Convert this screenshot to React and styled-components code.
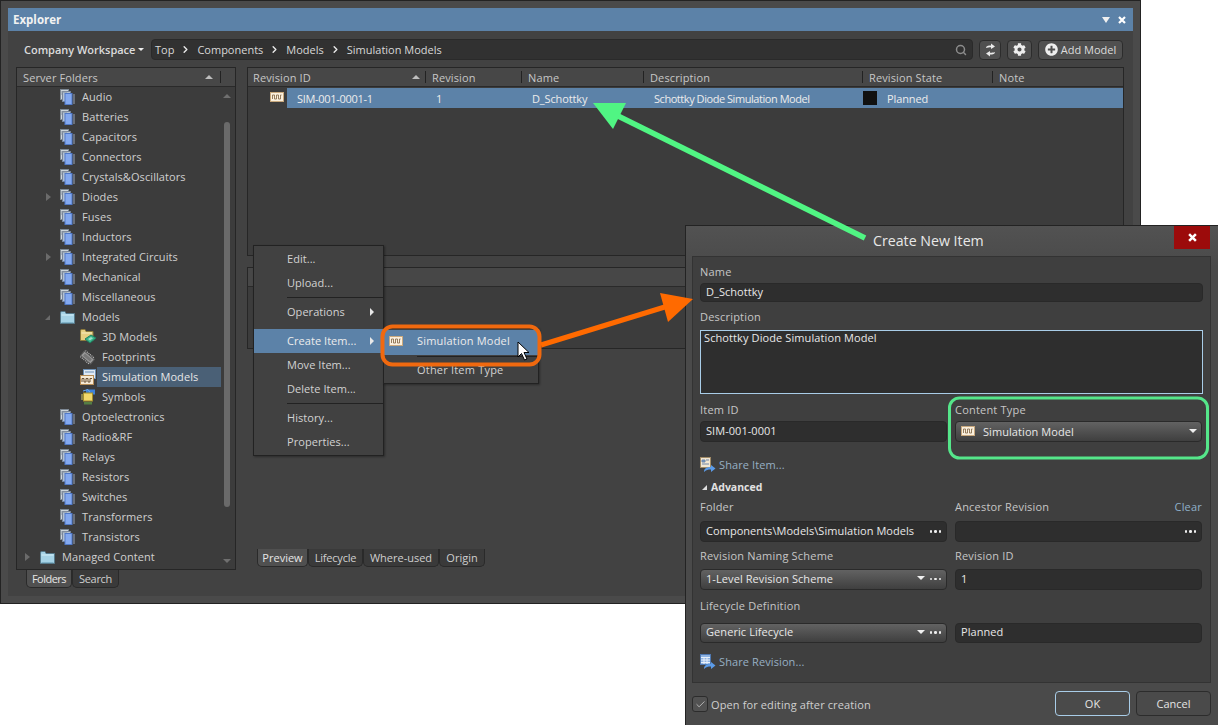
import React from 'react';
import styled, { createGlobalStyle } from 'styled-components';
import { Search, ChevronRight, Check } from 'lucide-react';
import { FaCog, FaPlusCircle } from 'react-icons/fa';

const Global = createGlobalStyle`
  html, body { margin: 0; padding: 0; background: #fff; }
  * { box-sizing: border-box; }
  #root { font-family: "Open Sans", "Noto Sans", "Liberation Sans", sans-serif; font-size: 11px; color: #d2d2d2; }
`;

const Desktop = styled.div`
  position: relative; width: 1218px; height: 725px; overflow: hidden; background: #fff;
`;

/* ---------- Explorer window ---------- */
const Explorer = styled.section`
  position: absolute; left: 0; top: 0; width: 1141px; height: 604px;
  background: #4a4a4a; border: 1px solid #232323; padding: 7px 7px 7px 7px;
  display: flex; flex-direction: column;
`;
const TitleBar = styled.header`
  height: 23px; background: #5c82a8; color: #f2f2f2; font-weight: 700; font-size: 11.5px;
  display: flex; align-items: center; justify-content: space-between; padding: 0 7px 0 5px;
`;
const TitleIcons = styled.div`display: flex; align-items: center; gap: 8px;`;
const Body = styled.div`
  flex: 1; background: #424242; padding: 8px 9px 8px 8px; display: flex; flex-direction: column; gap: 7px;
`;
const Toolbar = styled.div`display: flex; align-items: center; height: 21px;`;
const WorkspaceMenu = styled.div`
  width: 135px; padding-left: 8px; font-weight: 600; color: #dcdcdc; display: flex; align-items: center; gap: 3px; white-space: nowrap; letter-spacing: -.02px;
`;
const Caret = styled.span`
  width: 0; height: 0; border-left: 3px solid transparent; border-right: 3px solid transparent;
  border-top: 3px solid #eee; display: inline-block;
`;
const PathBar = styled.div`
  width: 822px; height: 21px; background: #313131; border: 1px solid #2a2a2a; border-radius: 4px;
  display: flex; align-items: center; padding: 0 5px 0 3px; color: #d8d8d8; gap: 6px;
  svg.chev { color: #eaeaea; }
`;
const Spacer = styled.div`flex: 1;`;
const ToolButton = styled.button`
  height: 20px; width: ${p => p.$w}px; margin-left: 6px; padding: 0; font: inherit; color: #dcdcdc;
  background: #505050; border: 1px solid #2c2c2c; border-radius: 4px;
  display: flex; align-items: center; justify-content: center; gap: 3px;
`;
const Columns = styled.div`display: flex; gap: 11px; flex: 1;`;
const LeftCol = styled.div`width: 220px; display: flex; flex-direction: column;`;
const RightCol = styled.div`flex: 1; display: flex; flex-direction: column; padding-bottom: 21px;`;
const Panel = styled.div`
  border: 1px solid #262626; background: #3c3c3c; display: flex; flex-direction: column;
  height: ${p => p.$h}px; margin-bottom: ${p => p.$mb || 0}px;
`;
const PanelHead = styled.div`
  height: 19px; background: #474747; border-bottom: 1px solid #2a2a2a; display: flex; align-items: center; color: #c6c6c6; flex-shrink: 0;
`;
const HeadTitle = styled.div`flex: 1; padding-left: 6px; letter-spacing: .1px;`;
const SortUp = styled.span`
  width: 0; height: 0; border-left: 4px solid transparent; border-right: 4px solid transparent;
  border-bottom: 4px solid #bdbdbd; display: block;
`;
const HeadSep = styled.span`width: 1px; height: 12px; background: #222; margin: 0 14px 0 7px;`;
const TreeWrap = styled.div`flex: 1; display: flex;`;
const Tree = styled.div`flex: 1; display: flex; flex-direction: column;`;
const TreeRow = styled.div`
  height: 20px; display: flex; align-items: center; padding-left: ${p => 6 + p.$level * 20}px; flex-shrink: 0;
`;
const Expander = styled.span`width: 17px; height: 20px; display: flex; align-items: center; padding-left: ${p => p.$x || 1}px;`;
const IconSlot = styled.span`width: 20px; height: 20px; display: flex; align-items: center;`;
const RowLabel = styled.span`
  height: 20px; line-height: 20px; padding: 0 2px; color: #d0d0d0; white-space: nowrap; letter-spacing: .08px;
  ${p => p.$sel ? 'background:#4a6076; width:124px; margin-left:-3px; padding-left:5px; color:#e6e6e6;' : ''}
`;
const ScrollBar = styled.div`width: 14px; position: relative;`;
const ScrollThumb = styled.div`
  position: absolute; left: 3px; top: 35px; width: 6px; height: 385px; background: #6a6a6a; border-radius: 3px;
`;
const ArrowUp = styled.span`
  position: absolute; left: 2px; top: 7px; width: 0; height: 0; border-left: 4px solid transparent; border-right: 4px solid transparent;
  border-bottom: 4px solid #6f6f6f;
`;
const ArrowDown = styled.span`
  position: absolute; left: 2px; bottom: 6px; width: 0; height: 0; border-left: 4px solid transparent; border-right: 4px solid transparent;
  border-top: 4px solid #6f6f6f;
`;
const Tabs = styled.div`display: flex; margin-left: ${p => p.$ml}px;`;
const Tab = styled.div`
  height: 18px; width: ${p => p.$w}px; border: 1px solid #2a2a2a; border-top: none; border-radius: 0 0 5px 5px;
  background: ${p => p.$active ? '#505050' : '#3a3a3a'}; color: ${p => p.$active ? '#e6e6e6' : '#cfcfcf'};
  display: flex; align-items: center; justify-content: center; letter-spacing: ${p => p.$ls ?? 0}px;
`;

/* ---------- Table ---------- */
const HeadCell = styled.div`
  width: ${p => p.$w}px; height: 100%; display: flex; align-items: center; padding-left: ${p => p.$first ? 5 : 7}px; position: relative; letter-spacing: .12px;
  flex-shrink: 0;
  &::before { content: ''; display: ${p => p.$first ? 'none' : 'block'}; position: absolute; left: 0; top: 3px; height: 12px; width: 1px; background: #222; }
`;
const SortMark = styled.span`position: absolute; right: 5px; top: 7px; display: block;`;
const Row = styled.div`display: flex; height: 20px; margin-top: 1px;`;
const RowIcon = styled.div`width: 39px; display: flex; align-items: center; padding-left: 22px; padding-bottom: 3px;`;
const SelBand = styled.div`flex: 1; background: #5c82a8; display: flex; align-items: center; color: #ececec;`;
const Cell = styled.div`
  width: ${p => p.$w}px; padding-left: ${p => p.$pl}px; flex-shrink: 0; display: flex; align-items: center; gap: 10px;
  letter-spacing: ${p => p.$ls ?? -.12}px; white-space: pre;
`;
const Swatch = styled.span`width: 14px; height: 14px; background: #111; display: inline-block;`;

/* ---------- Context menu ---------- */
const Menu = styled.div`
  position: absolute; left: ${p => p.$x}px; top: ${p => p.$y}px; width: ${p => p.$w}px; height: ${p => p.$h}px;
  background: #414141; border: 1px solid #222; padding-top: 1px; box-shadow: 1px 1px 2px rgba(0,0,0,.35);
`;
const MenuItem = styled.div`
  height: 24px; display: flex; align-items: center; padding: 0 0 2px 33px; position: relative; letter-spacing: .05px;
  background: ${p => p.$active ? '#5c82a8' : 'transparent'}; color: ${p => p.$active ? '#ececec' : '#d2d2d2'};
`;
const MenuSep = styled.div`height: 5px; padding: 2px 0 2px 33px; &::after { content: ''; display: block; height: 1px; background: ${p => p.$faint ? 'transparent' : '#222'}; }`;
const MenuTri = styled.span`
  position: absolute; right: 9px; top: 8px; width: 0; height: 0; border-top: 4px solid transparent; border-bottom: 4px solid transparent;
  border-left: 4px solid #e8e8e8;
`;
const SubItem = styled(MenuItem)`height: ${p => p.$h || 24}px; padding-bottom: ${p => p.$pb ?? 2}px; letter-spacing: .2px;`;
const SubIcon = styled.span`position: absolute; left: 5px; top: 6px; display: flex;`;
const SubSep = styled.div`height: 3px; padding: 1px 0 1px 33px; &::after { content: ''; display: block; height: 1px; background: #222; }`;

/* ---------- Dialog ---------- */
const Dialog = styled.section`
  position: absolute; left: 685px; top: 225px; width: 533px; height: 500px;
  background: linear-gradient(#525252, #4a4a4a 40px, #4a4a4a); border: 1px solid #232323; border-right: none; border-bottom: none;
  display: flex; flex-direction: column;
`;
const DialogHead = styled.header`
  height: 30px; display: flex; justify-content: space-between; align-items: flex-start; padding: 0 8px 0 187px; flex-shrink: 0;
`;
const DialogTitle = styled.div`font-size: 14.2px; color: #e8e8e8; line-height: 30px;`;
const CloseBtn = styled.div`
  width: 36px; height: 23px; background: #9c0b0b; display: flex; align-items: center; justify-content: center;
`;
const DialogPanel = styled.div`
  margin: 0 7px 0 6px; height: 427px; background: #3f3f3f; border: 1px solid #333; padding: 7px 7px 0 7px;
`;
const FieldLabel = styled.div`
  height: 16px; line-height: 16px; color: #c6c6c6; letter-spacing: .2px; display: flex; justify-content: space-between;
  margin-top: ${p => p.$mt || 0}px; margin-bottom: ${p => p.$mb ?? 3}px;
`;
const ClearLink = styled.span`color: #8fb0c9;`;
const TextBox = styled.div`
  height: ${p => p.$h || 21}px; background: #2e2e2e; border: 1px solid #292929; border-radius: 4px; color: #e8e8e8;
  display: flex; align-items: center; justify-content: space-between; padding: 0 5px ${p => p.$pb ?? 2}px; letter-spacing: .05px; white-space: nowrap;
`;
const TextArea = styled.div`
  height: 64px; background: #2e2e2e; border: 1px solid #a9cde8; color: #e8e8e8; padding: 0 3px; line-height: 14px; letter-spacing: .1px;
`;
const Pair = styled.div`display: grid; grid-template-columns: 247px 247px; column-gap: 8px; margin-top: ${p => p.$mt || 0}px;`;
const Dropdown = styled.div`
  height: ${p => p.$h || 21}px; background: linear-gradient(#626262, #3f3f3f); border: 1px solid #2a2a2a; border-radius: 4px; color: #e8e8e8;
  display: flex; align-items: center; padding: 0 5px ${p => p.$pb ?? 1}px; gap: 5px; letter-spacing: .08px; white-space: nowrap;
`;
const Grow = styled.span`flex: 1;`;
const DownTri = styled.span`
  width: 0; height: 0; border-left: 4.5px solid transparent; border-right: 4.5px solid transparent; border-top: 4px solid #f0f0f0; display: inline-block;
  margin-right: ${p => p.$mr || 0}px;
`;
const Dots = styled.span`display: inline-flex; gap: 2px; margin-top: 2px;
  i { width: 2.5px; height: 2.5px; border-radius: 50%; background: #eee; display: block; }
`;
const ShareLine = styled.div`
  height: 16px; display: flex; align-items: center; gap: 3px; color: #97afc4; margin-top: ${p => p.$mt}px; letter-spacing: .1px;
  span { margin-top: -2px; }
`;
const AdvancedLine = styled.div`
  height: 16px; display: flex; align-items: center; gap: 4px; font-weight: 700; color: #e2e2e2; margin-top: 6px; padding-left: 2px; font-size: 10.5px;
`;
const ExpandedTri = styled.span`
  width: 0; height: 0; border-left: 5px solid transparent; border-bottom: 5px solid ${p => p.$c || '#ddd'}; display: inline-block;
`;
const DialogFoot = styled.footer`
  flex: 1; display: flex; align-items: flex-start; padding: 8px 7px 0 6px; gap: 6px;
`;
const CheckBox = styled.span`
  width: 16px; height: 16px; margin-top: 5px; border: 1px solid #2c2c2c; border-radius: 3px; background: #525252; display: flex; align-items: center; justify-content: center; color: #ddd;
`;
const CheckLabel = styled.span`color: #cfcfcf; margin: 5px 0 0 -3px; line-height: 18px; letter-spacing: .12px;`;
const DlgButton = styled.div`
  width: 75px; height: 25px; border: 1px solid ${p => p.$primary ? '#a9cde8' : '#2c2c2c'}; border-radius: 4px; background: #4a4a4a;
  color: #e4e4e4; display: flex; align-items: center; justify-content: center;
`;

/* ---------- Overlay ---------- */
const Overlay = styled.svg`position: absolute; left: 0; top: 0; pointer-events: none;`;

/* ---------- Icon drawings ---------- */
const StackIcon = () => (
  <svg width="15" height="16" viewBox="0 0 15 16">
    <rect x=".5" y=".5" width="8" height="10" fill="#cdd5dc" stroke="#7d8894" />
    <rect x="2.5" y="2.5" width="8" height="10" fill="#b2c0d2" stroke="#76849a" />
    <rect x="5" y="4.5" width="7" height="11" fill="#84a9f0" stroke="#5079c8" />
    <path d="M13 6h2M13 8h2M13 10h2M13 12h2M13 14h2" stroke="#97a3b8" strokeWidth="1" />
    <path d="M1 3h6M1 5h1" stroke="#8a95a2" />
  </svg>
);
const FolderIcon = () => (
  <svg width="15" height="13" viewBox="0 0 15 13">
    <path d="M.5 2V12.5H14.5V2.5H6L5 .5H1Z" fill="#a6d3e6" stroke="#56798a" />
    <path d="M1.5 4H13.5" stroke="#d4eef8" />
    <path d="M1.5 11.5H13.5" stroke="#7fb2c8" />
  </svg>
);
const Folder3D = () => (
  <svg width="17" height="16" viewBox="0 0 17 16">
    <path d="M.5 2V11.5H13V2.5H6L5 .5H1Z" fill="#e6cf82" stroke="#8c7a3c" />
    <path d="M1.5 4H12" stroke="#f7ecc0" />
    <path d="M5 10L11 6L16 9L10 14Z" fill="#37b38a" stroke="#1e7f60" />
    <path d="M8 10l3-2 2 1.2-3 2.2Z" fill="#9be0c8" />
  </svg>
);
const FootprintIcon = () => (
  <svg width="15" height="15" viewBox="0 0 15 15">
    <g transform="rotate(40 7.5 7.5)">
      <rect x="1" y="4.5" width="13" height="6" fill="#9a9a9a" stroke="#5a5a5a" />
      <path d="M2 3v1M4 3v1M6 3v1M8 3v1M10 3v1M12 3v1M2 11v1M4 11v1M6 11v1M8 11v1M10 11v1M12 11v1" stroke="#c8c8c8" />
      <rect x="3" y="6" width="9" height="3" fill="#777" />
    </g>
  </svg>
);
const SimBadge = ({ w = 14, h = 10 }) => (
  <svg width={w} height={h} viewBox="0 0 14 10">
    <rect x=".5" y=".5" width="13" height="9" fill="#fbf0de" stroke="#c9a97e" />
    <path d="M2.5 7V3H4.5V7H6.5V3H8.5V7H10.5V3H11.5" fill="none" stroke="#8a7050" strokeWidth=".9" />
  </svg>
);
const SimTreeIcon = () => (
  <svg width="16" height="16" viewBox="0 0 16 16">
    <rect x="3.5" y=".5" width="12" height="9" fill="#dfe9f4" stroke="#6b8fb5" />
    <path d="M5 3h9" stroke="#6b8fb5" />
    <rect x=".5" y="6.5" width="13" height="9" fill="#f6ead6" stroke="#b58c56" />
    <path d="M2 13V9.5H4V13H6V9.5H8V13H10V9.5H12" fill="none" stroke="#6a5236" />
  </svg>
);
const SymbolIcon = () => (
  <svg width="16" height="16" viewBox="0 0 16 16">
    <rect x="6" y=".5" width="9" height="5" fill="#3f82d8" />
    <path d="M3 2l5-1.5 2 3" fill="none" stroke="#6aaaf0" />
    <rect x="3.5" y="4" width="9" height="8" fill="#f1d86a" stroke="#a48f2a" />
    <path d="M1 6h2M1 8h2M1 10h2" stroke="#d6c65a" />
    <path d="M5 13v2.5M7 13v2.5M9 13v2.5M11 13v2.5" stroke="#6fc04d" />
  </svg>
);
const ShareIcon = ({ table }) => (
  <svg width="16" height="16" viewBox="0 0 16 16">
    <rect x=".5" y=".5" width="10" height="10" fill={table ? '#8fb4e4' : '#f1e6d2'} stroke={table ? '#4f78b0' : '#a08a66'} />
    {table
      ? <path d="M1 3.5h9M1 6h9M1 8.5h9M4 3.5v6.5M7 3.5v6.5" stroke="#e8f0fa" />
      : <path d="M2 3h3v2H2ZM2 7h7M6 3h3" stroke="#6f86a8" fill="#6f9ad0" />}
    <path d="M4 15c0-4 3-5 7-5V8l4.5 3.5L11 15v-2.5c-3 0-5 .5-7 2.5Z" fill="#5b9be8" />
  </svg>
);
const SwapIcon = () => (
  <svg width="11" height="14" viewBox="0 0 11 14">
    <path d="M1 5C1 3 3 2.5 6 2.5V.5L10 3.5L6 6V4.2C4 4.2 2.6 4.4 1 5Z" fill="#eaeaea" />
    <path d="M10 9C10 11 8 11.5 5 11.5V13.5L1 10.5L5 8V9.8C7 9.8 8.4 9.6 10 9Z" fill="#eaeaea" />
  </svg>
);
const Xmark = ({ s = 8, w = 2.2 }) => (
  <svg width={s} height={s} viewBox="0 0 8 8"><path d="M1 1L7 7M7 1L1 7" stroke="#fff" strokeWidth={w} /></svg>
);
const RightTri = () => (
  <svg width="7" height="8" viewBox="0 0 7 8"><path d="M1 0L6 4L1 8Z" fill="#6b6b6b" /></svg>
);

/* ---------- Data ---------- */
const stack = <StackIcon />;
const treeRows = [
  ['Audio', 1, stack], ['Batteries', 1, stack], ['Capacitors', 1, stack], ['Connectors', 1, stack],
  ['Crystals&Oscillators', 1, stack], ['Diodes', 1, stack, 'closed'], ['Fuses', 1, stack], ['Inductors', 1, stack],
  ['Integrated Circuits', 1, stack, 'closed'], ['Mechanical', 1, stack], ['Miscellaneous', 1, stack],
  ['Models', 1, <FolderIcon />, 'open'], ['3D Models', 2, <Folder3D />], ['Footprints', 2, <FootprintIcon />],
  ['Simulation Models', 2, <SimTreeIcon />, null, true], ['Symbols', 2, <SymbolIcon />],
  ['Optoelectronics', 1, stack], ['Radio&RF', 1, stack], ['Relays', 1, stack], ['Resistors', 1, stack],
  ['Switches', 1, stack], ['Transformers', 1, stack], ['Transistors', 1, stack],
  ['Managed Content', 0, <FolderIcon />, 'closed'],
];
const crumbs = ['Top', 'Components', 'Models', 'Simulation Models'];
const headCols = [['Revision ID', 177], ['Revision', 96], ['Name', 122], ['Description', 219], ['Revision State', 130], ['Note', 130]];
const Dot3 = () => <Dots><i /><i /><i /></Dots>;

export default function App() {
  return (
    <Desktop>
      <Global />
      <Explorer>
        <TitleBar>
          <span>Explorer</span>
          <TitleIcons>
            <svg width="8" height="6" viewBox="0 0 8 6"><path d="M0 0H8L4 6Z" fill="#f0f0f0" /></svg>
            <Xmark />
          </TitleIcons>
        </TitleBar>
        <Body>
          <Toolbar>
            <WorkspaceMenu>Company Workspace <Caret /></WorkspaceMenu>
            <PathBar>
              {crumbs.map((c, i) => (
                <React.Fragment key={c}>
                  {i > 0 && <ChevronRight className="chev" size={11} strokeWidth={3} />}
                  <span>{c}</span>
                </React.Fragment>
              ))}
              <Spacer />
              <Search size={12} color="#8c8c8c" strokeWidth={3} />
            </PathBar>
            <ToolButton $w={22}><SwapIcon /></ToolButton>
            <ToolButton $w={25}><FaCog size={13} color="#eee" /></ToolButton>
            <ToolButton $w={85}><FaPlusCircle size={13} color="#eee" />Add Model</ToolButton>
          </Toolbar>
          <Columns>
            <LeftCol>
              <Panel $h={503}>
                <PanelHead>
                  <HeadTitle>Server Folders</HeadTitle>
                  <SortUp />
                  <HeadSep />
                </PanelHead>
                <TreeWrap>
                  <Tree>
                    {treeRows.map(([label, level, icon, exp, sel]) => (
                      <TreeRow key={label} $level={level}>
                        <Expander $x={level === 0 ? 1 : 2}>
                          {exp === 'closed' && <RightTri />}
                          {exp === 'open' && <ExpandedTri $c="#6b6b6b" />}
                        </Expander>
                        <IconSlot>{icon}</IconSlot>
                        <RowLabel $sel={sel}>{label}</RowLabel>
                      </TreeRow>
                    ))}
                  </Tree>
                  <ScrollBar>
                    <ArrowUp />
                    <ScrollThumb />
                    <ArrowDown />
                  </ScrollBar>
                </TreeWrap>
              </Panel>
              <Tabs $ml={10}>
                <Tab $active $w={46} $ls={-.5}>Folders</Tab>
                <Tab $w={47} $ls={-.3}>Search</Tab>
              </Tabs>
            </LeftCol>
            <RightCol>
              <Panel $h={189} $mb={11}>
                <PanelHead>
                  {headCols.map(([h, w], i) => (
                    <HeadCell key={h} $w={w} $first={i === 0}>
                      {h}
                      {i === 0 && <SortMark><SortUp /></SortMark>}
                    </HeadCell>
                  ))}
                </PanelHead>
                <Row>
                  <RowIcon><SimBadge /></RowIcon>
                  <SelBand>
                    <Cell $w={138} $pl={10} $ls={-.3}>SIM-001-0001-1</Cell>
                    <Cell $w={96} $pl={11}>1</Cell>
                    <Cell $w={122} $pl={11}>D_Schottky</Cell>
                    <Cell $w={219} $pl={11} $ls={-.45}>Schottky Diode Simulation Model</Cell>
                    <Cell $w={130} $pl={1}><Swatch />Planned</Cell>
                  </SelBand>
                </Row>
              </Panel>
              <Panel $h={82}>
                <PanelHead />
              </Panel>
              <Spacer />
              <Tabs $ml={10}>
                <Tab $active $w={51}>Preview</Tab>
                <Tab $w={55} $ls={-.2}>Lifecycle</Tab>
                <Tab $w={76}>Where-used</Tab>
                <Tab $w={46}>Origin</Tab>
              </Tabs>
            </RightCol>
          </Columns>
        </Body>
      </Explorer>

      <Menu $x={253} $y={245} $w={131} $h={211}>
        <MenuItem>Edit...</MenuItem>
        <MenuItem>Upload...</MenuItem>
        <MenuSep />
        <MenuItem>Operations<MenuTri /></MenuItem>
        <MenuSep $faint />
        <MenuItem $active>Create Item...<MenuTri /></MenuItem>
        <MenuItem>Move Item...</MenuItem>
        <MenuItem>Delete Item...</MenuItem>
        <MenuSep />
        <MenuItem>History...</MenuItem>
        <MenuItem>Properties...</MenuItem>
      </Menu>
      <Menu $x={383} $y={328} $w={156} $h={56}>
        <SubItem $active $h={25} $pb={4}>
          <SubIcon><SimBadge /></SubIcon>
          Simulation Model
        </SubItem>
        <SubSep />
        <SubItem $h={24}>Other Item Type</SubItem>
      </Menu>

      <Dialog>
        <DialogHead>
          <DialogTitle>Create New Item</DialogTitle>
          <CloseBtn><Xmark s={9} /></CloseBtn>
        </DialogHead>
        <DialogPanel>
          <FieldLabel>Name</FieldLabel>
          <TextBox $h={19} $pb={3}>D_Schottky</TextBox>
          <FieldLabel $mt={7} $mb={5}>Description</FieldLabel>
          <TextArea>Schottky Diode Simulation Model</TextArea>
          <Pair $mt={8}>
            <div>
              <FieldLabel>Item ID</FieldLabel>
              <TextBox>SIM-001-0001</TextBox>
            </div>
            <div>
              <FieldLabel>Content Type</FieldLabel>
              <Dropdown><SimBadge />&nbsp;Simulation Model<Grow /><DownTri $mr={-1} /></Dropdown>
            </div>
          </Pair>
          <ShareLine $mt={15}><ShareIcon /><span>Share Item...</span></ShareLine>
          <AdvancedLine><ExpandedTri $c="#ddd" />Advanced</AdvancedLine>
          <Pair $mt={4}>
            <div>
              <FieldLabel $mb={6}>Folder</FieldLabel>
              <TextBox>Components\Models\Simulation Models<Dot3 /></TextBox>
            </div>
            <div>
              <FieldLabel $mb={6}>Ancestor Revision<ClearLink>Clear</ClearLink></FieldLabel>
              <TextBox><span /><Dot3 /></TextBox>
            </div>
          </Pair>
          <Pair $mt={6}>
            <div>
              <FieldLabel $mb={5}>Revision Naming Scheme</FieldLabel>
              <Dropdown $pb={3}>1-Level Revision Scheme<Grow /><DownTri /><Dot3 /></Dropdown>
            </div>
            <div>
              <FieldLabel $mb={5}>Revision ID</FieldLabel>
              <TextBox>1</TextBox>
            </div>
          </Pair>
          <Pair $mt={8}>
            <div>
              <FieldLabel $mb={9}>Lifecycle Definition</FieldLabel>
              <Dropdown $h={20} $pb={3}>Generic Lifecycle<Grow /><DownTri /><Dot3 /></Dropdown>
            </div>
            <div>
              <FieldLabel $mb={9}>&nbsp;</FieldLabel>
              <TextBox $h={20} $pb={3}>Planned</TextBox>
            </div>
          </Pair>
          <ShareLine $mt={11}><ShareIcon table /><span>Share Revision...</span></ShareLine>
        </DialogPanel>
        <DialogFoot>
          <CheckBox><Check size={11} strokeWidth={1.5} /></CheckBox>
          <CheckLabel>Open for editing after creation</CheckLabel>
          <Grow />
          <DlgButton $primary>OK</DlgButton>
          <DlgButton>Cancel</DlgButton>
        </DialogFoot>
      </Dialog>

      <Overlay width="1218" height="725" viewBox="0 0 1218 725">
        <rect x="382.5" y="326.5" width="157" height="38" rx="10" fill="none" stroke="#f0690f" strokeWidth="4" />
        <line x1="541" y1="345" x2="668" y2="306" stroke="#ff6a00" strokeWidth="5" />
        <path d="M693 299L660 293L668 322Z" fill="#ff6a00" />
        <rect x="949.5" y="398" width="258" height="60" rx="10" fill="none" stroke="#55e68a" strokeWidth="3" />
        <line x1="865" y1="238" x2="612" y2="113" stroke="#50f583" strokeWidth="5.5" />
        <path d="M593 103L626 103L613 129Z" fill="#50f583" />
        <path d="M518 342V357L521.5 353.5L524.5 360L527 359L524 352.5H529Z" fill="#fff" stroke="#000" strokeWidth="1" />
      </Overlay>
    </Desktop>
  );
}
